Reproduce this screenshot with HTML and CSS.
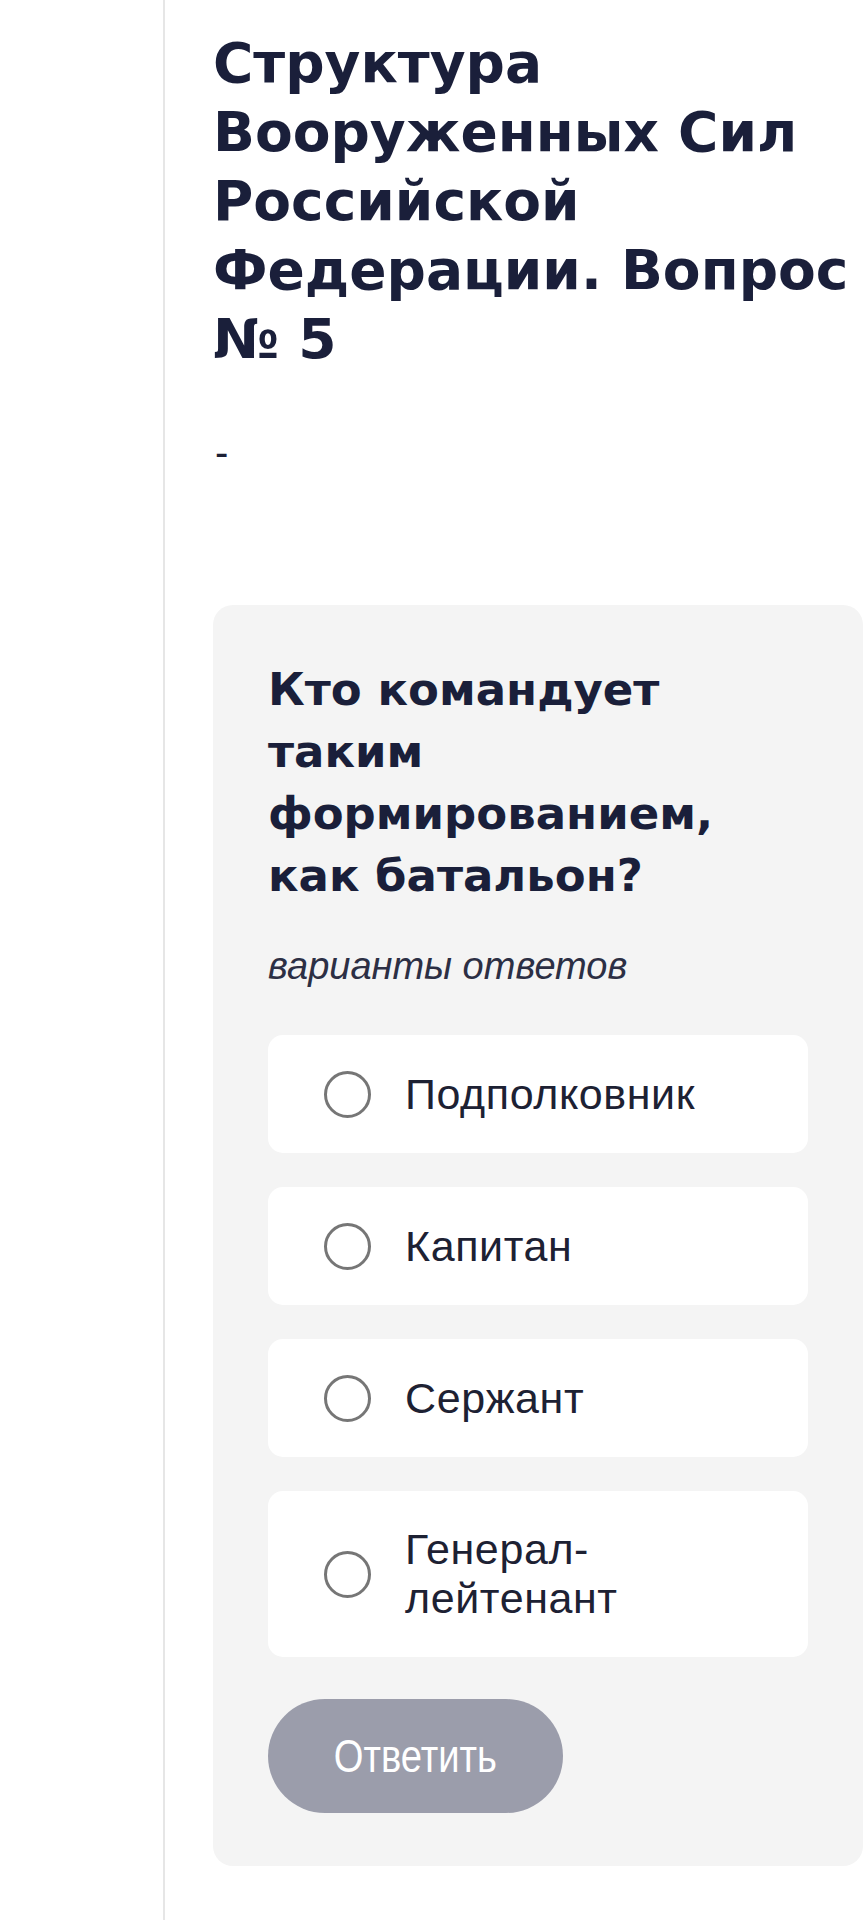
FILE: index.html
```html
<!DOCTYPE html>
<html lang="ru">

<head>
    <meta charset="UTF-8">
    <meta name="viewport" content="width=device-width, initial-scale=1.0">
    <title>Структура Вооруженных Сил Российской Федерации. Вопрос № 5</title>
    <link rel="stylesheet" href="styles.css">
</head>

<body>
    <div class="page">
        <div class="rail"></div>
        <main class="content">
            <h1 class="lesson-title">Структура Вооруженных Сил Российской Федерации. Вопрос №&nbsp;5</h1>
            <p class="lesson-text">-</p>

            <section class="quiz">
                <h2 class="quiz-question">Кто командует таким формированием, как батальон?</h2>
                <p class="quiz-hint">варианты ответов</p>
                <form class="quiz-form" name="quiz" onsubmit="return false">
                    <div class="quiz-options">
                        <label class="option">
                            <input type="radio" name="answer" value="1">
                            <span class="radio"></span>
                            <span class="option-text">Подполковник</span>
                        </label>
                        <label class="option">
                            <input type="radio" name="answer" value="2">
                            <span class="radio"></span>
                            <span class="option-text">Капитан</span>
                        </label>
                        <label class="option">
                            <input type="radio" name="answer" value="3">
                            <span class="radio"></span>
                            <span class="option-text">Сержант</span>
                        </label>
                        <label class="option">
                            <input type="radio" name="answer" value="4">
                            <span class="radio"></span>
                            <span class="option-text">Генерал-лейтенант</span>
                        </label>
                    </div>
                    <button type="submit" class="quiz-submit" disabled><span>Ответить</span></button>
                </form>
            </section>
        </main>
    </div>
</body>

</html>
```

FILE: styles.css
```css
* {
    margin: 0;
    padding: 0;
    box-sizing: border-box;
}

body {
    font-family: "Liberation Sans", Arial, sans-serif;
    color: #1c2035;
    background: #fff;
}

.page {
    display: flex;
    min-height: 1920px;
}

/* left rail with a thin divider */
.rail {
    width: 165px;
    flex-shrink: 0;
    border-right: 2px solid #e6e6e6;
}

.content {
    flex: 1;
    padding: 29px 1px 40px 48px;
}

.lesson-title {
    font-family: "DejaVu Sans", sans-serif;
    font-weight: 700;
    font-size: 55px;
    line-height: 69px;
    color: #1a1f3a;
}

.lesson-text {
    margin-top: 48px;
    font-size: 40px;
    line-height: 60px;
    padding-left: 2px;
}

.quiz {
    margin-top: 123px;
    background: #f4f4f4;
    border-radius: 20px;
    padding: 54px 55px 53px 55px;
}

.quiz-question {
    font-family: "DejaVu Sans", sans-serif;
    font-weight: 700;
    font-size: 45px;
    line-height: 62px;
    color: #1a1f3a;
}

.quiz-hint {
    margin-top: 34px;
    font-size: 38px;
    line-height: 50px;
    font-style: italic;
    font-weight: 400;
    color: #2c2f44;
}

.quiz-options {
    margin-top: 44px;
    display: flex;
    flex-direction: column;
    gap: 34px;
}

.option {
    display: flex;
    align-items: center;
    min-height: 118px;
    background: #fff;
    border-radius: 15px;
    padding: 34px 60px 34px 56px;
    cursor: pointer;
}

.option input {
    display: none;
}

.radio {
    width: 47px;
    height: 47px;
    flex-shrink: 0;
    border: 3px solid #767676;
    border-radius: 50%;
    margin-right: 34px;
}

.option input:checked + .radio {
    border: 14px solid #1a1f3a;
}

.option-text {
    font-size: 43px;
    line-height: 49px;
    letter-spacing: 0.6px;
    color: #1d2133;
}

.quiz-submit {
    display: block;
    margin-top: 42px;
    width: 295px;
    height: 114px;
    border: none;
    border-radius: 57px;
    background: #9b9dab;
    color: #fff;
    font-family: "Liberation Sans", sans-serif;
    font-size: 46px;
}

/* narrow label inside the pill */
.quiz-submit span {
    display: inline-block;
    transform: scaleX(0.83);
}
```
